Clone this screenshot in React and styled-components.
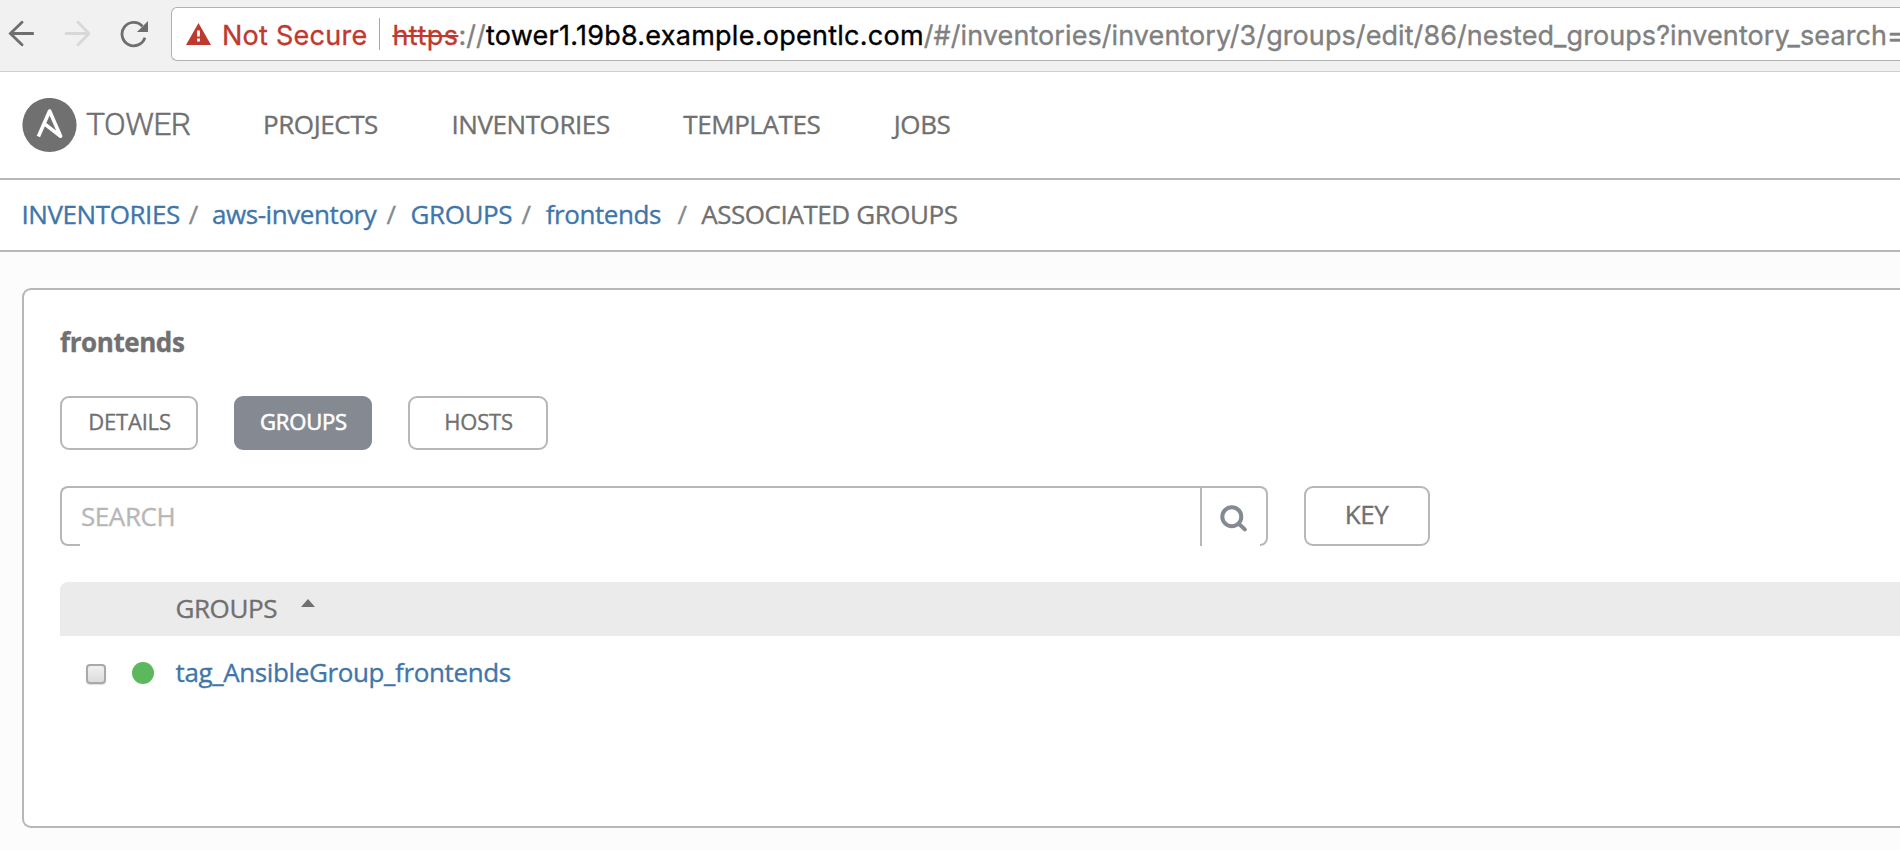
import React from 'react';
import styled, { createGlobalStyle } from 'styled-components';

const GlobalStyle = createGlobalStyle`
  * { box-sizing: border-box; }
  html, body, #root { margin: 0; padding: 0; height: 100%; }
  body {
    overflow: hidden;
    background: #fcfcfc;
    color: #707070;
    font-family: 'Open Sans', sans-serif;
    font-size: 26px;
    letter-spacing: -0.42px;
    -webkit-text-stroke: 0.35px;
  }
  svg { flex: none; }
`;

const Page = styled.div`
  display: flex;
  flex-direction: column;
  height: 850px;
  overflow: hidden;
`;

const BrowserBar = styled.div`
  display: flex;
  flex: none;
  height: 72px;
  padding: 7px 0 0 8px;
  background: #f1f1f1;
  border-bottom: 1px solid #cfcfcf;
`;

const BrowserButtons = styled.div`
  display: flex;
  flex: none;
  width: 163px;
  gap: 30px;
  padding-top: 13px;
`;

const AddressField = styled.div`
  display: flex;
  flex: 1;
  align-items: center;
  height: 54px;
  padding-left: 14px;
  overflow: hidden;
  background: #fff;
  border: 1px solid #b2b2b2;
  border-right: 0;
  border-radius: 6px 0 0 6px;
  font-family: Inter, sans-serif;
  font-size: 27px;
  white-space: nowrap;
`;

const SecurityLabel = styled.span`
  margin: 2px 0 0 11px;
  color: #be3a30;
  letter-spacing: 0.25px;
`;

const FieldDivider = styled.span`
  flex: none;
  width: 1px;
  height: 32px;
  margin: 0 12px 0 12px;
  background: #a8a8a8;
`;

const Url = styled.span`
  margin-top: 2px;
  color: #808080;
  letter-spacing: 0.08px;
`;

const Scheme = styled.span`
  color: #be3a30;
  letter-spacing: 0.45px;
  text-decoration: line-through;
  text-decoration-thickness: 2px;
`;

const Host = styled.span`
  color: #000;
  letter-spacing: 0.26px;
`;

const NavBar = styled.nav`
  display: flex;
  flex: none;
  align-items: center;
  height: 108px;
  padding-left: 22px;
  background: #fff;
  border-bottom: 2px solid #b7b7b7;
`;

const Brand = styled.div`
  display: flex;
  align-items: center;
  width: 241px;
`;

const BrandName = styled.span`
  margin: -2px 0 0 9px;
  font: 300 32px/40px Roboto, sans-serif;
  letter-spacing: -0.6px;
  -webkit-text-stroke: 0.5px;
`;

const NavLinks = styled.div`
  display: flex;
  gap: 73.5px;
`;

const NavLink = styled.a`
  margin-top: -2px;
  line-height: 36px;
`;

const Breadcrumbs = styled.div`
  display: flex;
  flex: none;
  align-items: center;
  height: 72px;
  padding: 0 0 3px 21.5px;
  background: #fff;
  border-bottom: 2px solid #b7b7b7;
  white-space: pre;
`;

const Crumb = styled.a`
  color: ${p => (p.$current ? '#707070' : '#3f76aa')};
`;

const Slash = styled.span`
  margin: 0 ${p => p.$after || 15}px 0 ${p => p.$before || 9}px;
  color: #848992;
`;

const Panel = styled.main`
  flex: none;
  height: 540px;
  margin: 36px 0 0 22px;
  padding: 34px 0 0 36px;
  background: #fff;
  border: 2px solid #b7b7b7;
  border-right: 0;
  border-radius: 9px 0 0 9px;
`;

const PanelTitle = styled.h1`
  margin: 0;
  font-size: 26px;
  font-weight: 700;
  line-height: 36px;
`;

const TabRow = styled.div`
  display: flex;
  gap: 36px;
  margin-top: 36px;
`;

const Tab = styled.button`
  width: ${p => p.$width}px;
  height: 54px;
  padding: 0 0 4px 1px;
  border: 2px solid ${p => (p.$active ? '#848992' : '#b7b7b7')};
  border-radius: 9px;
  background: ${p => (p.$active ? '#848992' : '#fff')};
  color: ${p => (p.$active ? '#fff' : '#707070')};
  font: 400 22px 'Open Sans', sans-serif;
  letter-spacing: -0.2px;
  -webkit-text-stroke: ${p => (p.$active ? 0.6 : 0.35)}px;
`;

const SearchRow = styled.div`
  display: flex;
  gap: 36px;
  margin-top: 36px;
`;

const SearchBar = styled.div`
  display: flex;
  width: 1208px;
  height: 60px;
`;

const SearchEdge = styled.div`
  width: 20px;
  border: 2px solid #b7b7b7;
  border-right: 0;
  border-radius: 8px 0 0 8px;
`;

const SearchInput = styled.div`
  flex: 1;
  padding-left: 1px;
  border-top: 2px solid #b7b7b7;
  color: #b7b7b7;
  line-height: 56px;
`;

const SearchButton = styled.div`
  position: relative;
  display: flex;
  width: 68px;
  padding: 17px 0 0 19px;
  border: 2px solid #b7b7b7;
  border-left: 0;
  border-radius: 0 8px 8px 0;
  box-shadow: inset 2px 0 #b7b7b7;

  &::after {
    content: '';
    position: absolute;
    left: 2px;
    bottom: -2px;
    width: 58px;
    height: 2px;
    background: #fff;
  }
`;

const KeyButton = styled.button`
  width: 126px;
  height: 60px;
  padding: 0 1px 4px 0;
  border: 2px solid #b7b7b7;
  border-radius: 9px;
  background: #fff;
  color: #707070;
  font: 400 26px 'Open Sans', sans-serif;
  letter-spacing: -0.4px;
`;

const TableHeader = styled.div`
  display: flex;
  height: 54px;
  margin-top: 36px;
  padding-left: 115.5px;
  background: #ebebeb;
  border-radius: 8px 0 0 0;
  line-height: 52px;
`;

const SortCaret = styled.span`
  width: 0;
  height: 0;
  margin: 17px 0 0 24px;
  border: solid transparent;
  border-width: 0 7.5px 8px;
  border-bottom-color: #707070;
`;

const TableRow = styled.div`
  display: flex;
  align-items: center;
  height: 74px;
  padding-left: 26px;
`;

const Checkbox = styled.span`
  width: 20px;
  height: 20px;
  margin-top: 2px;
  border: 2px solid #a9a9a9;
  border-radius: 4px;
  background: linear-gradient(#f0f0f0, #dcdcdc);
  box-shadow: 0 1px 1px #dddddd;
`;

const StatusDot = styled.span`
  width: 22px;
  height: 22px;
  margin: 0 22px 0 25.5px;
  border-radius: 50%;
  background: #5cb85c;
`;

const RowLink = styled.a`
  margin-top: -2px;
  color: #3f76aa;
  letter-spacing: -0.38px;
`;

const ArrowIcon = ({ color, forward }) => (
  <svg width="26" height="28" viewBox="0 0 26 28" fill="none" stroke={color} strokeWidth="2.8" strokeLinecap="round">
    <path
      d={forward ? 'M2 13.5H24.4M14 2.3L25 13.5L14 24.7' : 'M25 13.5H2.6M14 2.3L2.4 13.5L14 24.7'}
    />
  </svg>
);

const ReloadIcon = () => (
  <svg width="28" height="28" viewBox="0 0 28 28">
    <path d="M24.9 17.6A11.7 11.7 0 1 1 22.4 6.2" fill="none" stroke="#6e6e6e" strokeWidth="2.8" />
    <path d="M28 1V12H17Z" fill="#6e6e6e" />
  </svg>
);

const WarningIcon = () => (
  <svg width="25" height="22" viewBox="0 0 25 22">
    <path d="M12.5 0L25 22H0Z" fill="#be3a30" />
    <path d="M11.1 7.5H13.9V13.6H11.1ZM11.1 15.6H13.9V18.4H11.1Z" fill="#fff" />
  </svg>
);

const BrandMark = () => (
  <svg width="55" height="55" viewBox="0 0 55 55">
    <circle cx="27.5" cy="27" r="27.1" fill="#707070" />
    <path
      d="M16.4 38.5L27.6 13L38.6 38.2L23.2 26.4"
      fill="none"
      stroke="#fff"
      strokeWidth="3.6"
      strokeLinejoin="round"
    />
  </svg>
);

const SearchIcon = () => (
  <svg width="28" height="28" viewBox="0 0 28 28" fill="none" stroke="#848992">
    <circle cx="12.8" cy="11.7" r="9.5" strokeWidth="4" />
    <path d="M19.8 18.8L25.8 24.4" strokeWidth="4" strokeLinecap="round" />
  </svg>
);

export default function App() {
  return (
    <Page>
      <GlobalStyle />
      <BrowserBar>
        <BrowserButtons>
          <ArrowIcon color="#6e6e6e" />
          <ArrowIcon color="#d8d8d8" forward />
          <ReloadIcon />
        </BrowserButtons>
        <AddressField>
          <WarningIcon />
          <SecurityLabel>Not Secure</SecurityLabel>
          <FieldDivider />
          <Url>
            <Scheme>https</Scheme>://<Host>tower1.19b8.example.opentlc.com</Host>
            /#/inventories/inventory/3/groups/edit/86/nested_groups?inventory_search=
          </Url>
        </AddressField>
      </BrowserBar>
      <NavBar>
        <Brand>
          <BrandMark />
          <BrandName>TOWER</BrandName>
        </Brand>
        <NavLinks>
          <NavLink>PROJECTS</NavLink>
          <NavLink>INVENTORIES</NavLink>
          <NavLink>TEMPLATES</NavLink>
          <NavLink>JOBS</NavLink>
        </NavLinks>
      </NavBar>
      <Breadcrumbs>
        <Crumb>INVENTORIES</Crumb>
        <Slash $after={14}>/</Slash>
        <Crumb>aws-inventory</Crumb>
        <Slash $before={10}>/</Slash>
        <Crumb>GROUPS</Crumb>
        <Slash $before={9.5}>/</Slash>
        <Crumb>frontends</Crumb>
        <Slash $before={16.5} $after={14.5}>/</Slash>
        <Crumb $current>ASSOCIATED GROUPS</Crumb>
      </Breadcrumbs>
      <Panel>
        <PanelTitle>frontends</PanelTitle>
        <TabRow>
          <Tab $width={138}>DETAILS</Tab>
          <Tab $width={138} $active>GROUPS</Tab>
          <Tab $width={140}>HOSTS</Tab>
        </TabRow>
        <SearchRow>
          <SearchBar>
            <SearchEdge />
            <SearchInput>SEARCH</SearchInput>
            <SearchButton>
              <SearchIcon />
            </SearchButton>
          </SearchBar>
          <KeyButton>KEY</KeyButton>
        </SearchRow>
        <TableHeader>
          GROUPS
          <SortCaret />
        </TableHeader>
        <TableRow>
          <Checkbox />
          <StatusDot />
          <RowLink>tag_AnsibleGroup_frontends</RowLink>
        </TableRow>
      </Panel>
    </Page>
  );
}
